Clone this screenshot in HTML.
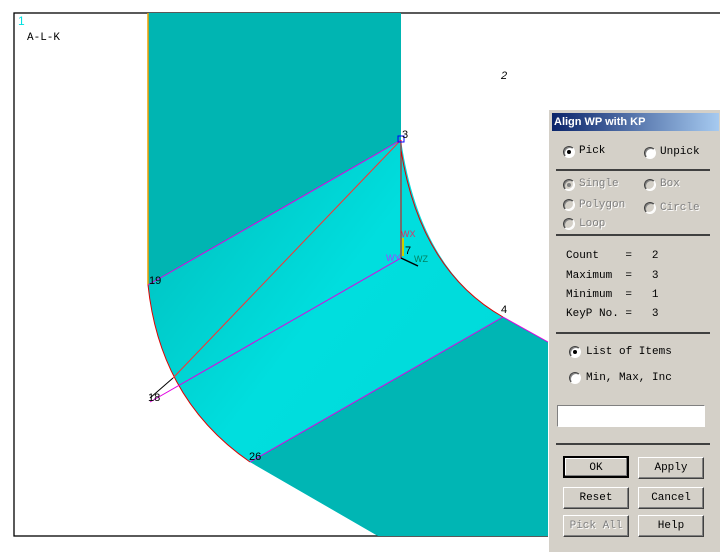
<!DOCTYPE html><html><head><style>
body{margin:0;width:720px;height:552px;overflow:hidden;background:#fff;position:relative;font-family:"Liberation Mono",monospace;}
.p{position:absolute;left:548px;top:110px;width:172px;height:442px;background:#d4d0c8;border-left:1px solid #fff;box-shadow:inset -1px 0 #404040;}
.t{position:absolute;left:3px;top:3px;width:167px;height:18px;background:linear-gradient(90deg,#0a246a,#a6caf0);color:#fff;font:bold 11px "Liberation Sans",sans-serif;line-height:18px;padding-left:2px;box-sizing:border-box;}
.l{position:absolute;font-size:11px;color:#000;white-space:pre;}
.g{color:#808080;text-shadow:1px 1px #fff;}
.r{position:absolute;width:10px;height:10px;border-radius:50%;background:#fff;box-shadow:inset 1px 1px #808080,inset -1px -1px #fff;border:1px solid #404040;border-color:#404040 #fff #fff #404040;}
.r.d{background:#d4d0c8}
.r.c::after{content:"";position:absolute;left:3px;top:3px;width:4px;height:4px;border-radius:50%;background:#000}
.r.d.c::after{background:#808080}
.h{position:absolute;left:7px;width:154px;height:2px;background:#404040;}
.b{position:absolute;width:66px;height:22px;box-sizing:border-box;border:1px solid;border-color:#fff #404040 #404040 #fff;box-shadow:inset -1px -1px #808080;font-size:11px;text-align:center;line-height:20px;}
</style></head><body>
<svg width="720" height="552" style="position:absolute;left:0;top:0">
<defs><linearGradient id="a" x1="0" y1="0" x2="1" y2="1"><stop offset="0" stop-color="#00b0ae"/><stop offset="0.5" stop-color="#00dede"/><stop offset="1" stop-color="#00d8d8"/></linearGradient></defs>
<rect x="14" y="13" width="720" height="523" fill="none" stroke="#000" stroke-width="1.3"/>
<path d="M148,13 L401,13 L401,140 Q420,270 503,317 L548,342 L548,536 L378,536 L250,462 Q160,400 148,285 Z" fill="url(#a)"/>
<path d="M148,13 L401,13 L401,140 L148,285 Z" fill="#00b5b2"/>
<path d="M503,317 L548,342 L548,536 L378,536 L250,462 Z" fill="#00b6b4"/>
<line x1="148" y1="13" x2="148" y2="285" stroke="#f0a000" stroke-width="1.5"/>
<path d="M401,150 Q420,270 503,317" fill="none" stroke="#e00000"/>
<path d="M250,462 Q160,400 148,285" fill="none" stroke="#e00000"/>
<line x1="148" y1="285" x2="401" y2="140" stroke="#e000e0"/>
<line x1="150" y1="402" x2="401" y2="258" stroke="#e000e0"/>
<line x1="250" y1="462" x2="503" y2="317" stroke="#e000e0"/>
<line x1="503" y1="317" x2="548" y2="342" stroke="#e000e0"/>
<line x1="173" y1="378" x2="399" y2="142" stroke="#ff3030"/>
<line x1="401" y1="140" x2="401" y2="258" stroke="#e00000"/>
<line x1="150" y1="398" x2="173" y2="378" stroke="#000"/>
<line x1="401" y1="258" x2="418" y2="266" stroke="#000" stroke-width="1.5"/>
<line x1="403" y1="238" x2="403" y2="256" stroke="#cccc00" stroke-width="2"/>
<rect x="398" y="136" width="6" height="6" fill="none" stroke="#00f"/>
<g font-family="Liberation Sans,sans-serif" font-size="11">
<text x="402" y="138">3</text><text x="149" y="284">19</text><text x="148" y="401">18</text>
<text x="249" y="460">26</text><text x="501" y="313">4</text><text x="405" y="254">7</text>
<text x="501" y="79" font-style="italic">2</text>
<text x="401" y="237" fill="#e03060" font-size="9">WX</text>
<text x="386" y="261" fill="#a040ff" font-size="9">WY</text>
<text x="414" y="262" fill="#008060" font-size="9">WZ</text>
<text x="18" y="25" fill="#00e0e0" font-size="12">1</text>
</g>
<text x="27" y="40" font-family="Liberation Mono,monospace" font-size="11">A-L-K</text>
</svg>
<div class="p">
<div class="t">Align WP with KP</div>
<div class="r c" style="left:14px;top:36px"></div><div class="l" style="left:30px;top:35px">Pick</div>
<div class="r" style="left:95px;top:37px"></div><div class="l" style="left:111px;top:36px">Unpick</div>
<div class="h" style="top:59px"></div>
<div class="r d c" style="left:14px;top:69px"></div><div class="l g" style="left:30px;top:68px">Single</div>
<div class="r d" style="left:95px;top:69px"></div><div class="l g" style="left:111px;top:68px">Box</div>
<div class="r d" style="left:14px;top:89px"></div><div class="l g" style="left:30px;top:89px">Polygon</div>
<div class="r d" style="left:95px;top:92px"></div><div class="l g" style="left:111px;top:92px">Circle</div>
<div class="r d" style="left:14px;top:108px"></div><div class="l g" style="left:30px;top:108px">Loop</div>
<div class="h" style="top:124px"></div>
<div class="l" style="left:17px;top:140px">Count    =   2</div>
<div class="l" style="left:17px;top:160px">Maximum  =   3</div>
<div class="l" style="left:17px;top:179px">Minimum  =   1</div>
<div class="l" style="left:17px;top:198px">KeyP No. =   3</div>
<div class="h" style="top:222px"></div>
<div class="r c" style="left:20px;top:236px"></div><div class="l" style="left:37px;top:236px">List of Items</div>
<div class="r" style="left:20px;top:262px"></div><div class="l" style="left:37px;top:262px">Min, Max, Inc</div>
<div style="position:absolute;left:8px;top:295px;width:146px;height:20px;background:#fff;border:1px solid;border-color:#808080 #fff #fff #808080;"></div>
<div class="h" style="top:333px"></div>
<div class="b" style="left:14px;top:346px;border:2px solid #000;box-shadow:inset -1px -1px #808080,inset 1px 1px #fff">OK</div>
<div class="b" style="left:89px;top:347px">Apply</div>
<div class="b" style="left:14px;top:377px">Reset</div>
<div class="b" style="left:89px;top:377px">Cancel</div>
<div class="b g" style="left:14px;top:405px">Pick All</div>
<div class="b" style="left:89px;top:405px">Help</div>
</div>
</body></html>
